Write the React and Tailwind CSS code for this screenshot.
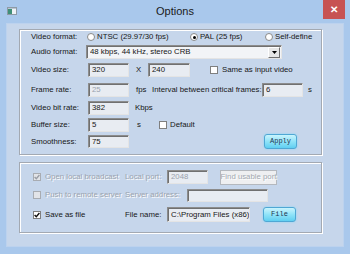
import React from 'react';

// Classic sunken edit box
const BOX =
  'flex items-center bg-[#e8ecf2] border border-t-[#8c8c8c] border-l-[#8c8c8c] border-r-[#e4e4e4] border-b-[#e4e4e4] shadow-[inset_1px_1px_0_#707070] pl-[3px] overflow-hidden whitespace-nowrap';
const DIS = 'text-[#9ba3ae] [text-shadow:1px_1px_0_#ffffff]';

const Radio = ({ checked }) => (
  <span className="w-[8px] h-[8px] rounded-full bg-white border border-[#8a8a8a] flex items-center justify-center shrink-0">
    {checked && <span className="w-[3px] h-[3px] rounded-full bg-black" />}
  </span>
);

const Check = ({ checked, disabled }) => (
  <span
    className={
      disabled
        ? 'w-[8px] h-[8px] bg-[#e2e4e8] border border-[#a8acb2] flex items-center justify-center shrink-0'
        : 'w-[8px] h-[8px] bg-white border border-[#7f7f7f] flex items-center justify-center shrink-0'
    }
  >
    {checked && (
      <svg width="6" height="6" viewBox="0 0 6 6">
        <path d="M0.6 3 L2.3 4.8 L5.4 1" fill="none" stroke={disabled ? '#9a9ea6' : '#111'} strokeWidth="1.4" />
      </svg>
    )}
  </span>
);

const CyanButton = ({ label, w }) => (
  <div
    className={
      'h-[15px] rounded-[3px] border border-[#4fa7d4] bg-gradient-to-b from-[#c9f4fd] via-[#8fe3f8] to-[#5fcff1] shadow-[0_0_2px_#7fd8f5] flex items-center justify-center font-["Liberation_Mono",monospace] text-[7px] text-[#1f3550] ' +
      w
    }
  >
    {label}
  </div>
);

const Row = ({ h, children }) => <div className={'flex items-center ' + h}>{children}</div>;

export default function App() {
  return (
    <div className="w-[350px] h-[254px] bg-[#a9c8ec] font-['Liberation_Sans',Arial,sans-serif] text-[7.8px] text-[#161616] overflow-hidden">
      {/* title bar */}
      <div className="h-[23px] grid grid-cols-[1fr_auto_1fr] items-start">
        <div className="pl-[7px] pt-[7px]">
          <svg width="10" height="8" viewBox="0 0 10 8">
            <rect x="0.5" y="0.5" width="9" height="7" fill="#eef2f6" stroke="#8e9aa6" />
            <rect x="1" y="1" width="4" height="6" fill="#3f8f78" />
            <rect x="1" y="1" width="8" height="1" fill="#b9c6d2" />
          </svg>
        </div>
        <div className="pt-[5px] text-[11px] text-[#1a1a1a] leading-[12px]">Options</div>
        <div className="flex justify-end pr-[5px]">
          <div className="w-[22px] h-[19px] bg-[#c75353] flex items-center justify-center text-white text-[10px] font-bold leading-none">
            ✕
          </div>
        </div>
      </div>

      {/* client area */}
      <div className="ml-[6px] w-[338px] h-[224px] bg-[#c6d6eb] border border-[#bcd2ee]">
        {/* group 1 */}
        <div className="ml-[12px] mt-[5px] w-[303px] h-[126px] border border-[#a3a9b2] shadow-[inset_1px_1px_0_#ffffff,1px_1px_0_#ffffff] pl-[11px]">
          <Row h="h-[14px]">
            <span className="w-[56px]">Video format:</span>
            <span className="w-[103px] flex items-center gap-[2px]">
              <Radio /> NTSC (29.97/30 fps)
            </span>
            <span className="w-[75px] flex items-center gap-[2px]">
              <Radio checked /> PAL (25 fps)
            </span>
            <span className="flex items-center gap-[2px]">
              <Radio /> Self-define
            </span>
          </Row>
          <Row h="h-[16px]">
            <span className="w-[55px]">Audio format:</span>
            <div className={BOX + ' w-[196px] h-[14px] bg-[#f2f4f7] pr-0'}>
              <span className="flex-1 overflow-hidden">48 kbps, 44 kHz, stereo CRB</span>
              <span className="w-[12px] h-[11px] mr-[1px] bg-[#e6e6e6] border border-t-white border-l-white border-r-[#6e6e6e] border-b-[#6e6e6e] flex items-center justify-center">
                <svg width="5" height="3" viewBox="0 0 5 3">
                  <path d="M0 0 H5 L2.5 3 Z" fill="#000" />
                </svg>
              </span>
            </div>
          </Row>
          <Row h="h-[20px]">
            <span className="w-[57px]">Video size:</span>
            <div className={BOX + ' w-[41px] h-[14px]'}>320</div>
            <span className="w-[19px] pl-[7px]">X</span>
            <div className={BOX + ' w-[42px] h-[14px]'}>240</div>
            <span className="ml-[20px] flex items-center gap-[4px]">
              <Check /> Same as input video
            </span>
          </Row>
          <Row h="h-[19px]">
            <span className="w-[57px]">Frame rate:</span>
            <div className={BOX + ' w-[41px] h-[14px] text-[#9aa2ad]'}>25</div>
            <span className="w-[23px] pl-[7px]">fps</span>
            <span className="w-[110px]">Interval between critical frames:</span>
            <div className={BOX + ' w-[41px] h-[14px]'}>6</div>
            <span className="ml-[5px]">s</span>
          </Row>
          <Row h="h-[17px]">
            <span className="w-[57px]">Video bit rate:</span>
            <div className={BOX + ' w-[41px] h-[14px]'}>382</div>
            <span className="ml-[6px]">Kbps</span>
          </Row>
          <Row h="h-[17px]">
            <span className="w-[57px]">Buffer size:</span>
            <div className={BOX + ' w-[41px] h-[14px]'}>5</div>
            <span className="w-[30px] pl-[8px]">s</span>
            <span className="flex items-center gap-[3px]">
              <Check /> Default
            </span>
          </Row>
          <Row h="h-[17px]">
            <span className="w-[57px]">Smoothness:</span>
            <div className={BOX + ' w-[41px] h-[13px]'}>75</div>
            <div className="ml-[135px]">
              <CyanButton label="Apply" w="w-[33px]" />
            </div>
          </Row>
        </div>

        {/* group 2 */}
        <div className="ml-[12px] mt-[7px] w-[303px] h-[71px] border border-[#a3a9b2] shadow-[inset_1px_1px_0_#ffffff,1px_1px_0_#ffffff] pl-[13px] pt-[6px]">
          <Row h="h-[16px]">
            <span className={'w-[92px] flex items-center gap-[4px] ' + DIS}>
              <Check checked disabled /> Open local broadcast
            </span>
            <span className={'w-[42px] ' + DIS}>Local port:</span>
            <div className={BOX + ' w-[41px] h-[14px] text-[#9aa2ad]'}>2048</div>
            <div className="ml-[12px] w-[57px] h-[15px] bg-[#eeeff1] border border-[#b4b8be] flex items-center justify-center text-[#a2a8b0] [text-shadow:1px_1px_0_#ffffff] whitespace-nowrap">
              Find usable port
            </div>
          </Row>
          <div className="mt-[2px]">
            <Row h="h-[16px]">
              <span className={'w-[92px] flex items-center gap-[4px] whitespace-nowrap ' + DIS}>
                <Check disabled /> Push to remote server
              </span>
              <span className={'w-[62px] ' + DIS}>Server address:</span>
              <div className={BOX + ' w-[81px] h-[13px]'} />
            </Row>
          </div>
          <div className="mt-[3px]">
            <Row h="h-[17px]">
              <span className="w-[92px] flex items-center gap-[4px]">
                <Check checked /> Save as file
              </span>
              <span className="w-[42px]">File name:</span>
              <div className={BOX + ' w-[83px] h-[15px]'}>C:\Program Files (x86)\</div>
              <div className="ml-[13px]">
                <CyanButton label="File" w="w-[33px]" />
              </div>
            </Row>
          </div>
        </div>
      </div>
    </div>
  );
}
